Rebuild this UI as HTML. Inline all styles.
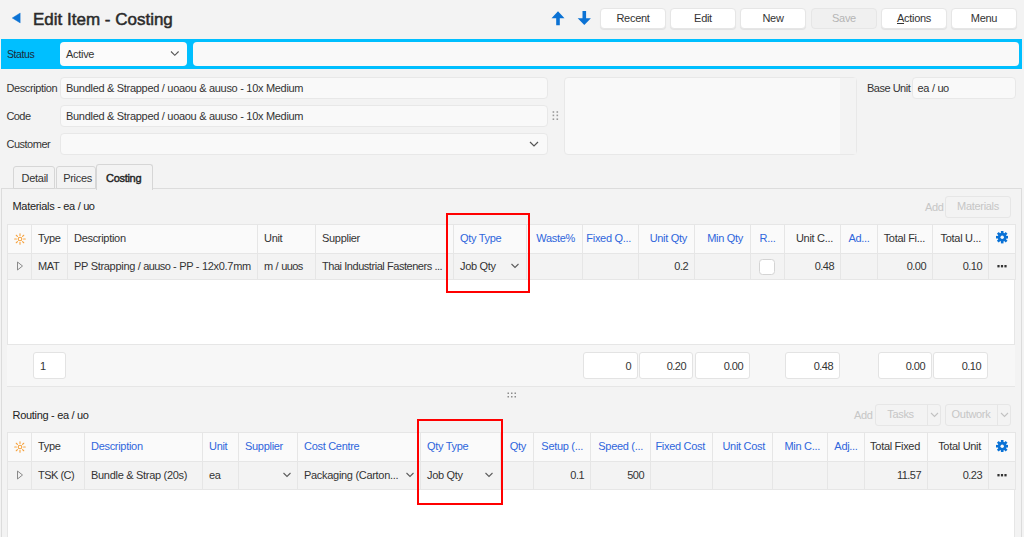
<!DOCTYPE html>
<html><head><meta charset="utf-8"><style>
html,body{margin:0;padding:0;width:1024px;height:537px;overflow:hidden;background:#f3f3f3;position:relative;font-family:"Liberation Sans",sans-serif;}
body>div,body>svg{position:absolute;}
.t{white-space:nowrap;}
</style></head><body>
<svg style="left:0;top:0" width="1024" height="40"><polygon points="20.2,13 12.2,18 20.2,22.9" fill="#0b72d4" stroke="#0b72d4" stroke-width="0.4" stroke-linejoin="round"/><path d="M558,11.2 L551.5,18.3 L556.2,18.3 L556.2,25.3 L559.8,25.3 L559.8,18.3 L564.5,18.3 Z" fill="#0b72d4"/><path d="M584.3,25.1 L577.7,18.2 L582.5,18.2 L582.5,11.1 L586.1,11.1 L586.1,18.2 L590.9,18.2 Z" fill="#0b72d4"/></svg>
<div class="t" style="left:33px;top:11.21px;font-size:17px;line-height:17px;color:#2b2b2b;font-weight:normal;letter-spacing:0px;-webkit-text-stroke:0.5px #2b2b2b;">Edit Item - Costing</div>
<div style="left:600px;top:8px;width:65.5px;height:21px;background:#fff;border:1px solid #e6e6e6;border-radius:4px;box-sizing:border-box;box-shadow:0 1px 1px rgba(0,0,0,0.07);"></div>
<div class="t" style="left:433px;width:400px;text-align:center;top:12.69px;font-size:11px;line-height:11px;color:#333;font-weight:normal;letter-spacing:-0.3px;">Recent</div>
<div style="left:670px;top:8px;width:65.5px;height:21px;background:#fff;border:1px solid #e6e6e6;border-radius:4px;box-sizing:border-box;box-shadow:0 1px 1px rgba(0,0,0,0.07);"></div>
<div class="t" style="left:503px;width:400px;text-align:center;top:12.69px;font-size:11px;line-height:11px;color:#333;font-weight:normal;letter-spacing:-0.3px;">Edit</div>
<div style="left:740px;top:8px;width:65.5px;height:21px;background:#fff;border:1px solid #e6e6e6;border-radius:4px;box-sizing:border-box;box-shadow:0 1px 1px rgba(0,0,0,0.07);"></div>
<div class="t" style="left:573px;width:400px;text-align:center;top:12.69px;font-size:11px;line-height:11px;color:#333;font-weight:normal;letter-spacing:-0.3px;">New</div>
<div style="left:811px;top:8px;width:65.5px;height:21px;background:#f0f0f0;border:1px solid #e6e6e6;border-radius:4px;box-sizing:border-box;"></div>
<div class="t" style="left:644px;width:400px;text-align:center;top:12.69px;font-size:11px;line-height:11px;color:#b5b5b5;font-weight:normal;letter-spacing:-0.3px;">Save</div>
<div style="left:881px;top:8px;width:65.5px;height:21px;background:#fff;border:1px solid #e6e6e6;border-radius:4px;box-sizing:border-box;box-shadow:0 1px 1px rgba(0,0,0,0.07);"></div>
<div class="t" style="left:714px;width:400px;text-align:center;top:12.69px;font-size:11px;line-height:11px;color:#333;font-weight:normal;letter-spacing:-0.3px;"><u>A</u>ctions</div>
<div style="left:951px;top:8px;width:65.5px;height:21px;background:#fff;border:1px solid #e6e6e6;border-radius:4px;box-sizing:border-box;box-shadow:0 1px 1px rgba(0,0,0,0.07);"></div>
<div class="t" style="left:784px;width:400px;text-align:center;top:12.69px;font-size:11px;line-height:11px;color:#333;font-weight:normal;letter-spacing:-0.3px;">Menu</div>
<div style="left:1px;top:39px;width:1021px;height:30px;background:#00bfff;"></div>
<div class="t" style="left:7px;top:48.61px;font-size:10.5px;line-height:10.5px;color:#1c2b3a;font-weight:normal;letter-spacing:-0.4px;">Status</div>
<div style="left:60px;top:42px;width:127px;height:24px;background:#fbfbfb;border-radius:4px;"></div>
<div class="t" style="left:66px;top:48.99px;font-size:11px;line-height:11px;color:#333;font-weight:normal;letter-spacing:-0.3px;">Active</div>
<svg style="left:169px;top:48px" width="12" height="10"><path d="M2,3.5 L5.8,7.3 L9.6,3.5" stroke="#555" stroke-width="1.1" fill="none"/></svg>
<div style="left:193px;top:42px;width:826px;height:24px;background:#f9f9f9;border-radius:4px;"></div>
<div class="t" style="left:6.5px;top:82.99px;font-size:11px;line-height:11px;color:#333;font-weight:normal;letter-spacing:-0.4px;">Description</div>
<div style="left:60px;top:77px;width:488px;height:22px;background:#f9f9f9;border:1px solid #e8e8e8;border-radius:4px;box-sizing:border-box;"></div>
<div class="t" style="left:66px;top:82.99px;font-size:11px;line-height:11px;color:#333;font-weight:normal;letter-spacing:-0.3px;">Bundled &amp; Strapped / uoaou &amp; auuso - 10x Medium</div>
<div class="t" style="left:6.5px;top:110.99px;font-size:11px;line-height:11px;color:#333;font-weight:normal;letter-spacing:-0.6px;">Code</div>
<div style="left:60px;top:105px;width:488px;height:22px;background:#f9f9f9;border:1px solid #e8e8e8;border-radius:4px;box-sizing:border-box;"></div>
<div class="t" style="left:66px;top:110.99px;font-size:11px;line-height:11px;color:#333;font-weight:normal;letter-spacing:-0.3px;">Bundled &amp; Strapped / uoaou &amp; auuso - 10x Medium</div>
<div class="t" style="left:6.5px;top:138.99px;font-size:11px;line-height:11px;color:#333;font-weight:normal;letter-spacing:-0.5px;">Customer</div>
<div style="left:60px;top:133px;width:488px;height:22px;background:#f9f9f9;border:1px solid #e8e8e8;border-radius:4px;box-sizing:border-box;"></div>
<svg style="left:528px;top:139px" width="12" height="10"><path d="M2,3 L6,7 L10,3" stroke="#555" stroke-width="1.2" fill="none"/></svg>
<svg style="left:550px;top:108px" width="10" height="14"><rect x="2.6" y="3.2" width="1.6" height="1.6" fill="#9a9a9a"/><rect x="2.6" y="6.6" width="1.6" height="1.6" fill="#9a9a9a"/><rect x="2.6" y="10.4" width="1.6" height="1.6" fill="#9a9a9a"/><rect x="6.5" y="3.2" width="1.6" height="1.6" fill="#9a9a9a"/><rect x="6.5" y="6.6" width="1.6" height="1.6" fill="#9a9a9a"/><rect x="6.5" y="10.4" width="1.6" height="1.6" fill="#9a9a9a"/></svg>
<div style="left:564px;top:77px;width:293px;height:78px;background:#f9f9f9;border:1px solid #e8e8e8;border-radius:4px;box-sizing:border-box;"></div>
<div style="left:840px;top:78px;width:16px;height:76px;background:#f3f3f3;"></div>
<div class="t" style="left:867px;top:83.19px;font-size:11px;line-height:11px;color:#333;font-weight:normal;letter-spacing:-0.5px;">Base Unit</div>
<div style="left:912px;top:77px;width:104px;height:22px;background:#f9f9f9;border:1px solid #e8e8e8;border-radius:4px;box-sizing:border-box;"></div>
<div class="t" style="left:917.5px;top:83.19px;font-size:11px;line-height:11px;color:#333;font-weight:normal;letter-spacing:-0.3px;">ea / <span style='letter-spacing:-0.5px'>uo</span></div>
<div style="left:1px;top:188px;width:1021px;height:360px;border:1px solid #dcdcdc;box-sizing:border-box;background:#f3f3f3;"></div>
<div style="left:13px;top:166px;width:42px;height:23px;border:1px solid #d6d6d6;border-radius:3px 3px 0 0;box-sizing:border-box;background:#f3f3f3;"></div>
<div style="left:56px;top:166px;width:40px;height:23px;border:1px solid #d6d6d6;border-radius:3px 3px 0 0;box-sizing:border-box;background:#f3f3f3;"></div>
<div style="left:96px;top:164px;width:57px;height:26px;border:1px solid #d6d6d6;border-bottom:none;border-radius:3px 3px 0 0;box-sizing:border-box;background:#f3f3f3;"></div>
<div class="t" style="left:21.6px;top:173.29px;font-size:11px;line-height:11px;color:#333;font-weight:normal;letter-spacing:-0.3px;">Detail</div>
<div class="t" style="left:63.2px;top:173.29px;font-size:11px;line-height:11px;color:#333;font-weight:normal;letter-spacing:-0.3px;">Prices</div>
<div class="t" style="left:106px;top:172.99px;font-size:11px;line-height:11px;color:#222;font-weight:normal;letter-spacing:-0.3px;-webkit-text-stroke:0.4px #222;">Costing</div>
<div class="t" style="left:12.5px;top:201.29px;font-size:11px;line-height:11px;color:#222;font-weight:normal;letter-spacing:-0.3px;">Materials - ea / <span style='letter-spacing:-0.5px'>uo</span></div>
<div class="t" style="left:925px;top:201.69px;font-size:11px;line-height:11px;color:#c6c6c6;font-weight:normal;letter-spacing:-0.3px;">Add</div>
<div style="left:945px;top:196px;width:66px;height:22px;border:1px solid #e6e6e6;border-radius:3px;box-sizing:border-box;background:#f3f3f3;"></div>
<div class="t" style="left:778px;width:400px;text-align:center;top:201.19px;font-size:11px;line-height:11px;color:#c6c6c6;font-weight:normal;letter-spacing:-0.3px;">Materials</div>
<div style="left:7px;top:224px;width:1008px;height:162px;background:#fff;border:1px solid #e6e6e6;box-sizing:border-box;"></div>
<div style="left:7px;top:224px;width:1008px;height:30px;background:#fafafa;"></div>
<div style="left:7px;top:254px;width:1008px;height:26px;background:#f3f3f3;"></div>
<div style="left:7px;top:224px;width:1008px;height:1px;background:#e6e6e6;"></div>
<div style="left:7px;top:253px;width:1008px;height:1px;background:#e6e6e6;"></div>
<div style="left:7px;top:279px;width:1008px;height:1px;background:#e6e6e6;"></div>
<div style="left:7px;top:224px;width:1px;height:56px;background:#e6e6e6;"></div>
<div style="left:31px;top:224px;width:1px;height:56px;background:#e6e6e6;"></div>
<div style="left:67px;top:224px;width:1px;height:56px;background:#e6e6e6;"></div>
<div style="left:257px;top:224px;width:1px;height:56px;background:#e6e6e6;"></div>
<div style="left:315px;top:224px;width:1px;height:56px;background:#e6e6e6;"></div>
<div style="left:453px;top:224px;width:1px;height:56px;background:#e6e6e6;"></div>
<div style="left:526px;top:224px;width:1px;height:56px;background:#e6e6e6;"></div>
<div style="left:582px;top:224px;width:1px;height:56px;background:#e6e6e6;"></div>
<div style="left:638px;top:224px;width:1px;height:56px;background:#e6e6e6;"></div>
<div style="left:694px;top:224px;width:1px;height:56px;background:#e6e6e6;"></div>
<div style="left:750px;top:224px;width:1px;height:56px;background:#e6e6e6;"></div>
<div style="left:784px;top:224px;width:1px;height:56px;background:#e6e6e6;"></div>
<div style="left:840px;top:224px;width:1px;height:56px;background:#e6e6e6;"></div>
<div style="left:877px;top:224px;width:1px;height:56px;background:#e6e6e6;"></div>
<div style="left:932px;top:224px;width:1px;height:56px;background:#e6e6e6;"></div>
<div style="left:988px;top:224px;width:1px;height:56px;background:#e6e6e6;"></div>
<div style="left:1015px;top:224px;width:1px;height:56px;background:#e6e6e6;"></div>
<div class="t" style="left:38px;top:232.99px;font-size:11px;line-height:11px;color:#333;font-weight:normal;letter-spacing:-0.3px;">Type</div>
<div class="t" style="left:74px;top:232.99px;font-size:11px;line-height:11px;color:#333;font-weight:normal;letter-spacing:-0.3px;">Description</div>
<div class="t" style="left:264px;top:232.99px;font-size:11px;line-height:11px;color:#333;font-weight:normal;letter-spacing:-0.3px;">Unit</div>
<div class="t" style="left:322px;top:232.99px;font-size:11px;line-height:11px;color:#333;font-weight:normal;letter-spacing:-0.3px;">Supplier</div>
<div class="t" style="left:460px;top:232.99px;font-size:11px;line-height:11px;color:#2f66dc;font-weight:normal;letter-spacing:-0.3px;">Qty Type</div>
<div class="t" style="right:449px;top:232.99px;font-size:11px;line-height:11px;color:#2f66dc;font-weight:normal;letter-spacing:-0.3px;">Waste%</div>
<div class="t" style="right:393px;top:232.99px;font-size:11px;line-height:11px;color:#2f66dc;font-weight:normal;letter-spacing:-0.3px;">Fixed Q...</div>
<div class="t" style="right:337px;top:232.99px;font-size:11px;line-height:11px;color:#2f66dc;font-weight:normal;letter-spacing:-0.3px;">Unit Qty</div>
<div class="t" style="right:281px;top:232.99px;font-size:11px;line-height:11px;color:#2f66dc;font-weight:normal;letter-spacing:-0.3px;">Min Qty</div>
<div class="t" style="left:567.5px;width:400px;text-align:center;top:232.99px;font-size:11px;line-height:11px;color:#2f66dc;font-weight:normal;letter-spacing:-0.3px;">R...</div>
<div class="t" style="right:191px;top:232.99px;font-size:11px;line-height:11px;color:#333;font-weight:normal;letter-spacing:-0.3px;">Unit C...</div>
<div class="t" style="left:659.0px;width:400px;text-align:center;top:232.99px;font-size:11px;line-height:11px;color:#2f66dc;font-weight:normal;letter-spacing:-0.3px;">Ad...</div>
<div class="t" style="right:99px;top:232.99px;font-size:11px;line-height:11px;color:#333;font-weight:normal;letter-spacing:-0.3px;">Total Fi...</div>
<div class="t" style="right:43px;top:232.99px;font-size:11px;line-height:11px;color:#333;font-weight:normal;letter-spacing:-0.3px;">Total U...</div>
<div class="t" style="left:38px;top:260.99px;font-size:11px;line-height:11px;color:#333;font-weight:normal;letter-spacing:-0.3px;">MAT</div>
<div class="t" style="left:74px;top:260.99px;font-size:11px;line-height:11px;color:#333;font-weight:normal;letter-spacing:-0.3px;">PP Strapping / <span style='letter-spacing:-0.6px'>auuso</span> - PP - 12x0.7mm</div>
<div class="t" style="left:264px;top:260.99px;font-size:11px;line-height:11px;color:#333;font-weight:normal;letter-spacing:-0.3px;">m / <span style='letter-spacing:-0.6px'>uuos</span></div>
<div class="t" style="left:322px;top:260.99px;font-size:11px;line-height:11px;color:#333;font-weight:normal;letter-spacing:-0.45px;">Thai Industrial Fasteners ...</div>
<div class="t" style="left:460px;top:260.99px;font-size:11px;line-height:11px;color:#333;font-weight:normal;letter-spacing:-0.3px;">Job Qty</div>
<div class="t" style="right:336px;top:260.99px;font-size:11px;line-height:11px;color:#333;font-weight:normal;letter-spacing:-0.55px;">0.2</div>
<div class="t" style="right:190px;top:260.99px;font-size:11px;line-height:11px;color:#333;font-weight:normal;letter-spacing:-0.55px;">0.48</div>
<div class="t" style="right:98px;top:260.99px;font-size:11px;line-height:11px;color:#333;font-weight:normal;letter-spacing:-0.55px;">0.00</div>
<div class="t" style="right:42px;top:260.99px;font-size:11px;line-height:11px;color:#333;font-weight:normal;letter-spacing:-0.55px;">0.10</div>
<div style="left:7px;top:344px;width:1008px;height:43px;background:#f7f7f7;border-top:1px solid #e6e6e6;border-bottom:1px solid #e6e6e6;box-sizing:border-box;"></div>
<div style="left:33px;top:352px;width:33px;height:27px;background:#fff;border:1px solid #e3e3e3;border-radius:3px;box-sizing:border-box;"></div>
<div class="t" style="left:40px;top:360.89px;font-size:11px;line-height:11px;color:#333;font-weight:normal;letter-spacing:-0.3px;">1</div>
<div style="left:583px;top:352px;width:55px;height:27px;background:#fff;border:1px solid #e3e3e3;border-radius:3px;box-sizing:border-box;"></div>
<div class="t" style="right:393px;top:360.89px;font-size:11px;line-height:11px;color:#333;font-weight:normal;letter-spacing:-0.55px;">0</div>
<div style="left:639px;top:352px;width:54px;height:27px;background:#fff;border:1px solid #e3e3e3;border-radius:3px;box-sizing:border-box;"></div>
<div class="t" style="right:338px;top:360.89px;font-size:11px;line-height:11px;color:#333;font-weight:normal;letter-spacing:-0.55px;">0.20</div>
<div style="left:695px;top:352px;width:55px;height:27px;background:#fff;border:1px solid #e3e3e3;border-radius:3px;box-sizing:border-box;"></div>
<div class="t" style="right:281px;top:360.89px;font-size:11px;line-height:11px;color:#333;font-weight:normal;letter-spacing:-0.55px;">0.00</div>
<div style="left:785px;top:352px;width:55px;height:27px;background:#fff;border:1px solid #e3e3e3;border-radius:3px;box-sizing:border-box;"></div>
<div class="t" style="right:191px;top:360.89px;font-size:11px;line-height:11px;color:#333;font-weight:normal;letter-spacing:-0.55px;">0.48</div>
<div style="left:878px;top:352px;width:54px;height:27px;background:#fff;border:1px solid #e3e3e3;border-radius:3px;box-sizing:border-box;"></div>
<div class="t" style="right:99px;top:360.89px;font-size:11px;line-height:11px;color:#333;font-weight:normal;letter-spacing:-0.55px;">0.00</div>
<div style="left:933px;top:352px;width:55px;height:27px;background:#fff;border:1px solid #e3e3e3;border-radius:3px;box-sizing:border-box;"></div>
<div class="t" style="right:43px;top:360.89px;font-size:11px;line-height:11px;color:#333;font-weight:normal;letter-spacing:-0.55px;">0.10</div>
<svg style="left:506px;top:391px" width="12" height="8"><rect x="1.5" y="1.5" width="1.5" height="1.5" fill="#8c8c8c"/><rect x="1.5" y="5" width="1.5" height="1.5" fill="#8c8c8c"/><rect x="5" y="1.5" width="1.5" height="1.5" fill="#8c8c8c"/><rect x="5" y="5" width="1.5" height="1.5" fill="#8c8c8c"/><rect x="8.5" y="1.5" width="1.5" height="1.5" fill="#8c8c8c"/><rect x="8.5" y="5" width="1.5" height="1.5" fill="#8c8c8c"/></svg>
<div class="t" style="left:12.5px;top:409.99px;font-size:11px;line-height:11px;color:#222;font-weight:normal;letter-spacing:-0.3px;">Routing - ea / <span style='letter-spacing:-0.5px'>uo</span></div>
<div class="t" style="left:854px;top:409.69px;font-size:11px;line-height:11px;color:#c6c6c6;font-weight:normal;letter-spacing:-0.3px;">Add</div>
<div style="left:875px;top:404px;width:66px;height:22px;border:1px solid #e6e6e6;border-radius:3px;box-sizing:border-box;background:#f3f3f3;"></div>
<div style="left:927px;top:405px;width:1px;height:20px;background:#e6e6e6;"></div>
<div class="t" style="left:700.5px;width:400px;text-align:center;top:408.69px;font-size:11px;line-height:11px;color:#c6c6c6;font-weight:normal;letter-spacing:-0.3px;">Tasks</div>
<svg style="left:928px;top:410px" width="12" height="10"><path d="M3,3 L6.5,6.5 L10,3" stroke="#c2c2c2" stroke-width="1.1" fill="none"/></svg>
<div style="left:945px;top:404px;width:66px;height:22px;border:1px solid #e6e6e6;border-radius:3px;box-sizing:border-box;background:#f3f3f3;"></div>
<div style="left:997px;top:405px;width:1px;height:20px;background:#e6e6e6;"></div>
<div class="t" style="left:771px;width:400px;text-align:center;top:408.69px;font-size:11px;line-height:11px;color:#c6c6c6;font-weight:normal;letter-spacing:-0.3px;">Outwork</div>
<svg style="left:998px;top:410px" width="12" height="10"><path d="M3,3 L6.5,6.5 L10,3" stroke="#c2c2c2" stroke-width="1.1" fill="none"/></svg>
<div style="left:7px;top:432px;width:1008px;height:120px;background:#fff;border:1px solid #e6e6e6;box-sizing:border-box;"></div>
<div style="left:7px;top:432px;width:1008px;height:30px;background:#fafafa;"></div>
<div style="left:7px;top:462px;width:1008px;height:28px;background:#f3f3f3;"></div>
<div style="left:7px;top:432px;width:1008px;height:1px;background:#e6e6e6;"></div>
<div style="left:7px;top:461px;width:1008px;height:1px;background:#e6e6e6;"></div>
<div style="left:7px;top:489px;width:1008px;height:1px;background:#e6e6e6;"></div>
<div style="left:7px;top:432px;width:1px;height:58px;background:#e6e6e6;"></div>
<div style="left:31px;top:432px;width:1px;height:58px;background:#e6e6e6;"></div>
<div style="left:84px;top:432px;width:1px;height:58px;background:#e6e6e6;"></div>
<div style="left:202px;top:432px;width:1px;height:58px;background:#e6e6e6;"></div>
<div style="left:238px;top:432px;width:1px;height:58px;background:#e6e6e6;"></div>
<div style="left:297px;top:432px;width:1px;height:58px;background:#e6e6e6;"></div>
<div style="left:420px;top:432px;width:1px;height:58px;background:#e6e6e6;"></div>
<div style="left:500px;top:432px;width:1px;height:58px;background:#e6e6e6;"></div>
<div style="left:533px;top:432px;width:1px;height:58px;background:#e6e6e6;"></div>
<div style="left:590px;top:432px;width:1px;height:58px;background:#e6e6e6;"></div>
<div style="left:650px;top:432px;width:1px;height:58px;background:#e6e6e6;"></div>
<div style="left:712px;top:432px;width:1px;height:58px;background:#e6e6e6;"></div>
<div style="left:772px;top:432px;width:1px;height:58px;background:#e6e6e6;"></div>
<div style="left:827px;top:432px;width:1px;height:58px;background:#e6e6e6;"></div>
<div style="left:864px;top:432px;width:1px;height:58px;background:#e6e6e6;"></div>
<div style="left:927px;top:432px;width:1px;height:58px;background:#e6e6e6;"></div>
<div style="left:988px;top:432px;width:1px;height:58px;background:#e6e6e6;"></div>
<div style="left:1015px;top:432px;width:1px;height:58px;background:#e6e6e6;"></div>
<div class="t" style="left:38px;top:441.09px;font-size:11px;line-height:11px;color:#333;font-weight:normal;letter-spacing:-0.3px;">Type</div>
<div class="t" style="left:91px;top:441.09px;font-size:11px;line-height:11px;color:#2f66dc;font-weight:normal;letter-spacing:-0.3px;">Description</div>
<div class="t" style="left:209px;top:441.09px;font-size:11px;line-height:11px;color:#2f66dc;font-weight:normal;letter-spacing:-0.3px;">Unit</div>
<div class="t" style="left:245px;top:441.09px;font-size:11px;line-height:11px;color:#2f66dc;font-weight:normal;letter-spacing:-0.3px;">Supplier</div>
<div class="t" style="left:304px;top:441.09px;font-size:11px;line-height:11px;color:#2f66dc;font-weight:normal;letter-spacing:-0.3px;">Cost Centre</div>
<div class="t" style="left:427px;top:441.09px;font-size:11px;line-height:11px;color:#2f66dc;font-weight:normal;letter-spacing:-0.3px;">Qty Type</div>
<div class="t" style="right:498px;top:441.09px;font-size:11px;line-height:11px;color:#2f66dc;font-weight:normal;letter-spacing:-0.3px;">Qty</div>
<div class="t" style="right:441px;top:441.09px;font-size:11px;line-height:11px;color:#2f66dc;font-weight:normal;letter-spacing:-0.3px;">Setup (...</div>
<div class="t" style="right:381px;top:441.09px;font-size:11px;line-height:11px;color:#2f66dc;font-weight:normal;letter-spacing:-0.3px;">Speed (...</div>
<div class="t" style="right:319px;top:441.09px;font-size:11px;line-height:11px;color:#2f66dc;font-weight:normal;letter-spacing:-0.3px;">Fixed Cost</div>
<div class="t" style="right:259px;top:441.09px;font-size:11px;line-height:11px;color:#2f66dc;font-weight:normal;letter-spacing:-0.3px;">Unit Cost</div>
<div class="t" style="right:204px;top:441.09px;font-size:11px;line-height:11px;color:#2f66dc;font-weight:normal;letter-spacing:-0.3px;">Min C...</div>
<div class="t" style="left:646.0px;width:400px;text-align:center;top:441.09px;font-size:11px;line-height:11px;color:#2f66dc;font-weight:normal;letter-spacing:-0.3px;">Adj...</div>
<div class="t" style="right:104px;top:441.09px;font-size:11px;line-height:11px;color:#333;font-weight:normal;letter-spacing:-0.3px;">Total Fixed</div>
<div class="t" style="right:43px;top:441.09px;font-size:11px;line-height:11px;color:#333;font-weight:normal;letter-spacing:-0.3px;">Total Unit</div>
<div class="t" style="left:38px;top:469.79px;font-size:11px;line-height:11px;color:#333;font-weight:normal;letter-spacing:-0.5px;">TSK (C)</div>
<div class="t" style="left:91px;top:469.79px;font-size:11px;line-height:11px;color:#333;font-weight:normal;letter-spacing:-0.3px;">Bundle &amp; Strap (20s)</div>
<div class="t" style="left:209px;top:469.79px;font-size:11px;line-height:11px;color:#333;font-weight:normal;letter-spacing:-0.3px;">ea</div>
<div class="t" style="left:304px;top:469.79px;font-size:11px;line-height:11px;color:#333;font-weight:normal;letter-spacing:-0.3px;">Packaging (Carton...</div>
<div class="t" style="left:427px;top:469.79px;font-size:11px;line-height:11px;color:#333;font-weight:normal;letter-spacing:-0.3px;">Job Qty</div>
<div class="t" style="right:440px;top:469.79px;font-size:11px;line-height:11px;color:#333;font-weight:normal;letter-spacing:-0.55px;">0.1</div>
<div class="t" style="right:380px;top:469.79px;font-size:11px;line-height:11px;color:#333;font-weight:normal;letter-spacing:-0.55px;">500</div>
<div class="t" style="right:103px;top:469.79px;font-size:11px;line-height:11px;color:#333;font-weight:normal;letter-spacing:-0.55px;">11.57</div>
<div class="t" style="right:42px;top:469.79px;font-size:11px;line-height:11px;color:#333;font-weight:normal;letter-spacing:-0.55px;">0.23</div>
<svg style="left:12.5px;top:232px" width="14" height="14"><g stroke="#f6a33f" stroke-width="1.1" fill="none" stroke-linecap="round"><circle cx="7" cy="7" r="1.8"/><line x1="10.60" y1="7.00" x2="12.30" y2="7.00"/><line x1="9.55" y1="9.55" x2="10.75" y2="10.75"/><line x1="7.00" y1="10.60" x2="7.00" y2="12.30"/><line x1="4.45" y1="9.55" x2="3.25" y2="10.75"/><line x1="3.40" y1="7.00" x2="1.70" y2="7.00"/><line x1="4.45" y1="4.45" x2="3.25" y2="3.25"/><line x1="7.00" y1="3.40" x2="7.00" y2="1.70"/><line x1="9.55" y1="4.45" x2="10.75" y2="3.25"/></g></svg>
<svg style="left:15px;top:261px" width="10" height="10"><path d="M2.5,1 L7.5,5 L2.5,9 Z" stroke="#8a8a8a" stroke-width="1" fill="none"/></svg>
<svg style="left:995.8px;top:231.4px" width="12.4" height="12.4"><g fill="#0a72d6"><rect x="4.9" y="0" width="2.6" height="12.4" transform="rotate(0 6.2 6.2)"/><rect x="4.9" y="0" width="2.6" height="12.4" transform="rotate(45 6.2 6.2)"/><rect x="4.9" y="0" width="2.6" height="12.4" transform="rotate(90 6.2 6.2)"/><rect x="4.9" y="0" width="2.6" height="12.4" transform="rotate(135 6.2 6.2)"/><circle cx="6.2" cy="6.2" r="4.4"/></g><circle cx="6.2" cy="6.2" r="1.7" fill="#fafafa"/></svg>
<svg style="left:997px;top:264.6px" width="10" height="3"><rect x="0.4" y="0" width="2.2" height="2.4" fill="#333"/><rect x="3.9" y="0" width="2.2" height="2.4" fill="#333"/><rect x="7.4" y="0" width="2.2" height="2.4" fill="#333"/></svg>
<svg style="left:510.29999999999995px;top:262px" width="10" height="8"><path d="M1.5,2 L5,5.5 L8.5,2" stroke="#5c5c5c" stroke-width="1.1" fill="none"/></svg>
<div style="left:759px;top:259px;width:16px;height:16px;background:#fff;border:1px solid #d4d4d4;border-radius:3.5px;box-sizing:border-box;"></div>
<svg style="left:12.5px;top:440px" width="14" height="14"><g stroke="#f6a33f" stroke-width="1.1" fill="none" stroke-linecap="round"><circle cx="7" cy="7" r="1.8"/><line x1="10.60" y1="7.00" x2="12.30" y2="7.00"/><line x1="9.55" y1="9.55" x2="10.75" y2="10.75"/><line x1="7.00" y1="10.60" x2="7.00" y2="12.30"/><line x1="4.45" y1="9.55" x2="3.25" y2="10.75"/><line x1="3.40" y1="7.00" x2="1.70" y2="7.00"/><line x1="4.45" y1="4.45" x2="3.25" y2="3.25"/><line x1="7.00" y1="3.40" x2="7.00" y2="1.70"/><line x1="9.55" y1="4.45" x2="10.75" y2="3.25"/></g></svg>
<svg style="left:15px;top:470px" width="10" height="10"><path d="M2.5,1 L7.5,5 L2.5,9 Z" stroke="#8a8a8a" stroke-width="1" fill="none"/></svg>
<svg style="left:995.8px;top:439.8px" width="12.4" height="12.4"><g fill="#0a72d6"><rect x="4.9" y="0" width="2.6" height="12.4" transform="rotate(0 6.2 6.2)"/><rect x="4.9" y="0" width="2.6" height="12.4" transform="rotate(45 6.2 6.2)"/><rect x="4.9" y="0" width="2.6" height="12.4" transform="rotate(90 6.2 6.2)"/><rect x="4.9" y="0" width="2.6" height="12.4" transform="rotate(135 6.2 6.2)"/><circle cx="6.2" cy="6.2" r="4.4"/></g><circle cx="6.2" cy="6.2" r="1.7" fill="#fafafa"/></svg>
<svg style="left:997px;top:473.8px" width="10" height="3"><rect x="0.4" y="0" width="2.2" height="2.4" fill="#333"/><rect x="3.9" y="0" width="2.2" height="2.4" fill="#333"/><rect x="7.4" y="0" width="2.2" height="2.4" fill="#333"/></svg>
<svg style="left:282.3px;top:471px" width="10" height="8"><path d="M1.5,2 L5,5.5 L8.5,2" stroke="#5c5c5c" stroke-width="1.1" fill="none"/></svg>
<svg style="left:405.3px;top:471px" width="10" height="8"><path d="M1.5,2 L5,5.5 L8.5,2" stroke="#5c5c5c" stroke-width="1.1" fill="none"/></svg>
<svg style="left:483.6px;top:471px" width="10" height="8"><path d="M1.5,2 L5,5.5 L8.5,2" stroke="#5c5c5c" stroke-width="1.1" fill="none"/></svg>
<div style="left:446px;top:213px;width:84px;height:80px;border:2px solid #ff0000;box-sizing:border-box;"></div>
<div style="left:417px;top:419px;width:86px;height:86px;border:2px solid #ff0000;box-sizing:border-box;"></div>
</body></html>
